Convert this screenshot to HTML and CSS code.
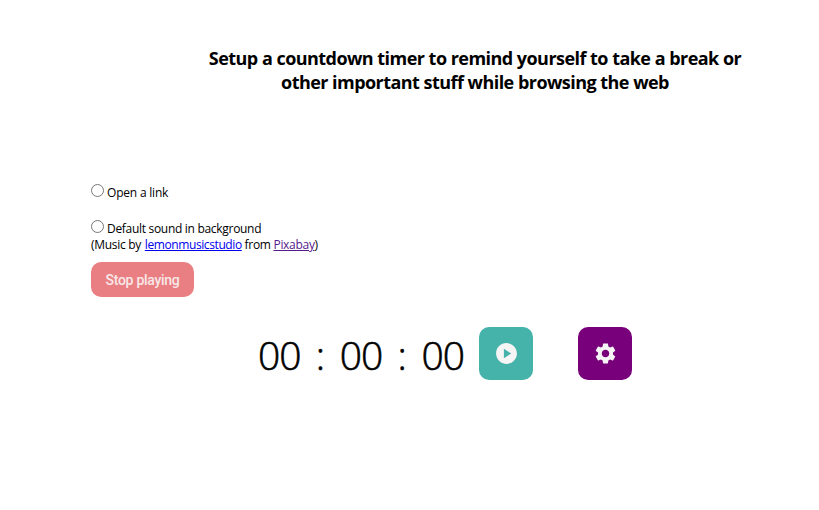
FILE: index.html
```html
<!DOCTYPE html>
<html lang="en">
<head>
<meta charset="utf-8">
<title>Countdown timer</title>
<link rel="stylesheet" href="styles.css">
</head>
<body>
<main class="page">
  <h3 class="title">Setup a countdown timer to remind yourself to take a break or<br>other important stuff while browsing the web</h3>
  <section class="options">
    <label class="option"><input type="radio" name="action"><span class="open-label">Open a link</span></label>
    <label class="option sound"><input type="radio" name="action"><span class="sound-label">Default sound in background</span></label>
    <p class="credit">(Music by <a class="artist" href="#">lemonmusicstudio</a> from <a class="source" href="#">Pixabay</a>)</p>
    <button class="stop" type="button">Stop playing</button>
  </section>
  <section class="timer">
    <div class="clock"><span class="digits">00</span><span class="colon">:</span><span class="digits">00</span><span class="colon">:</span><span class="digits">00</span></div>
    <button class="action play" type="button" aria-label="Start">
      <svg viewBox="0 0 24 24"><path d="M12 2C6.48 2 2 6.48 2 12s4.48 10 10 10 10-4.480 10-10S17.520 2 12 2zM9.500 16.500v-9l7 4.500z"/></svg>
    </button>
    <button class="action settings" type="button" aria-label="Settings">
      <svg viewBox="0 0 24 24"><path d="M19.140 12.940c.04-.3.06-.61.06-.94 0-.32-.02-.64-.07-.94l2.030-1.580c.18-.14.23-.41.12-.61l-1.920-3.320c-.12-.22-.37-.29-.59-.22l-2.390.96c-.5-.38-1.030-.7-1.620-.94l-.36-2.540c-.04-.24-.24-.41-.48-.41h-3.840c-.24 0-.43.17-.47.41l-.36 2.540c-.59.24-1.130.57-1.620.94l-2.390-.96c-.22-.08-.47 0-.59.22L2.740 8.870c-.12.21-.08.47.12.61l2.030 1.580c-.05.3-.09.63-.09.94s.02.640.07.94l-2.030 1.580c-.18.14-.23.41-.12.61l1.920 3.320c.12.22.37.29.59.22l2.390-.96c.5.38 1.030.7 1.620.94l.36 2.540c.05.24.24.41.48.41h3.840c.24 0 .44-.17.47-.41l.36-2.540c.59-.24 1.130-.56 1.620-.94l2.390.96c.22.08.47 0 .59-.22l1.920-3.320c.12-.22.07-.47-.12-.61l-2.010-1.580zM12 15.600c-1.980 0-3.600-1.620-3.600-3.600s1.620-3.600 3.600-3.600 3.600 1.620 3.600 3.600-1.620 3.600-3.600 3.600z"/></svg>
    </button>
  </section>
</main>
</body>
</html>
```
FILE: styles.css
```css
body {
  margin: 0;
  background: #fff;
  color: #000;
  font-family: "Open Sans", "Noto Sans", sans-serif;
}

.page {
  padding: 46px 0 0 91px;
}

.title {
  width: 768px;
  margin: 0;
  font-size: 18px;
  font-weight: 700;
  line-height: 24px;
  letter-spacing: -0.55px;
  word-spacing: 0.1px;
  text-align: center;
  white-space: nowrap;
}

.options {
  display: flex;
  flex-direction: column;
  align-items: flex-start;
  padding-top: 90px;
  font-size: 12px;
  line-height: 16px;
  letter-spacing: -0.3px;
}

.open-label { letter-spacing: -0.2px; }

.option {
  display: flex;
  gap: 3px;
  height: 16px;
  white-space: nowrap;
}

.option input {
  width: 13px;
  height: 13px;
  margin: 0;
}

.option span { padding-top: 1px; }
.sound { margin-top: 20px; }

.credit {
  margin: 1px 0 0;
  white-space: nowrap;
}

.artist {
  margin-left: 1px;
  color: #00e;
  letter-spacing: -0.4px;
}

.source { color: #551a8b; }

.stop {
  width: 103px;
  height: 35px;
  margin-top: 9px;
  padding: 0;
  border: 0;
  border-radius: 10px;
  background: #e97f82;
  color: #f8e8e8;
  font: 500 14px Roboto, sans-serif;
  letter-spacing: -0.28px;
}

.timer {
  display: flex;
  align-items: center;
  margin: 30px 0 0 167px;
}

.clock {
  display: flex;
  width: 221px;
  height: 53px;
  font-size: 39px;
  font-weight: 300;
  line-height: 56px;
  -webkit-text-stroke: 0.6px #000;
}

.digits {
  width: 43px;
  letter-spacing: -0.9px;
}

.colon {
  width: 38.7px;
  text-align: center;
}

.action {
  display: grid;
  place-items: center;
  width: 54px;
  height: 53px;
  padding: 0;
  border: 0;
  border-radius: 10px;
}

.action svg {
  width: 25px;
  height: 25px;
  margin-bottom: 1px;
  fill: #f5f5f5;
}

.play { background: #45b3aa; }

.settings {
  margin-left: 45px;
  background: #79007b;
}
```
